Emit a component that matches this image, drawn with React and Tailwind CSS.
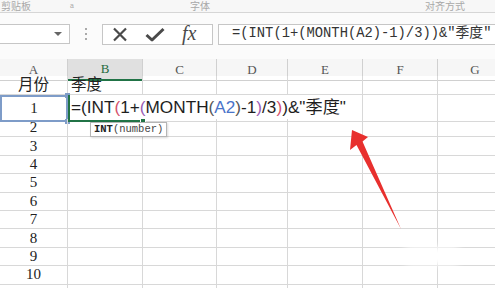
import React from 'react';

const grid = 'grid grid-cols-[68px_75px_74px_71px_75px_75px_75px]';
const line = 'border-[#d8d8d8]';

function Cell({ className = '', children }) {
  return (
    <div className={`relative border-r border-b ${line} ${className}`}>
      {children}
    </div>
  );
}

function FormulaText() {
  return (
    <span className="whitespace-nowrap text-[#1e1e1e]">
      =(INT<span className="text-[#d4506c]">(</span>1+<span className="text-[#9a5cb4]">(</span>MONTH
      <span className="text-[#555]">(</span>
      <span className="text-[#4a74c9]">A2</span>
      <span className="text-[#555]">)</span>-1<span className="text-[#9a5cb4]">)</span>/3
      <span className="text-[#d4506c]">)</span>)&amp;"季度"
    </span>
  );
}

export default function App() {
  const headers = ['A', 'B', 'C', 'D', 'E', 'F', 'G'];
  const rows = ['2', '3', '4', '5', '6', '7', '8', '9', '10', ''];

  return (
    <div className="relative w-[495px] h-[288px] overflow-hidden bg-white font-['Liberation_Sans','Noto_Sans_CJK_SC',sans-serif]">
      {/* ribbon group labels */}
      <div className="h-[13px] border-b border-[#d6d6d6] bg-[#f7f7f7] flex items-center">
        <div className="flex text-[10px] leading-[11px] text-[#a8a8a8]">
          <span className="w-[70px] pl-[1px]">剪贴板</span>
          <span className="w-[120px]">ᵃ</span>
          <span className="w-[235px]">字体</span>
          <span>对齐方式</span>
        </div>
      </div>

      {/* formula bar */}
      <div className="h-[46px] bg-[#fbfbfb] pt-[11px]">
        <div className="flex items-center h-[20px]">
          <div className="w-[70px] h-[20px] border border-l-0 border-[#c6c6c6] bg-white flex items-center justify-end pr-[7px]">
            <div className="w-0 h-0 border-l-[4px] border-r-[4px] border-t-[4px] border-l-transparent border-r-transparent border-t-[#666]" />
          </div>
          <div className="w-[32px] flex flex-col items-center gap-[3px]">
            <span className="w-[2px] h-[2px] bg-[#aaa]" />
            <span className="w-[2px] h-[2px] bg-[#aaa]" />
            <span className="w-[2px] h-[2px] bg-[#aaa]" />
          </div>
          <div className="w-[111px] h-[21px] border border-[#c6c6c6] bg-white flex items-center pl-[9px] gap-[17px]">
            <svg width="16" height="15" viewBox="0 0 16 15">
              <path d="M2 1.5 L14 13.5 M14 1.5 L2 13.5" stroke="#4a4a4a" strokeWidth="2.2" fill="none" />
            </svg>
            <svg width="20" height="15" viewBox="0 0 20 15">
              <path d="M1.5 8 L7 13 L18.5 2" stroke="#4a4a4a" strokeWidth="3" fill="none" strokeLinejoin="round" />
            </svg>
            <span className="font-['Liberation_Serif',serif] italic text-[20px] leading-[18px] text-[#4a4a4a] -mt-[2px]">fx</span>
          </div>
          <div className="ml-[5px] flex-1 h-[21px] border border-r-0 border-[#c6c6c6] bg-white flex items-center pl-[13px] overflow-hidden">
            <span className="font-['Liberation_Mono','Noto_Sans_CJK_SC',monospace] text-[13.8px] text-[#333] whitespace-nowrap">
              =(INT(1+(MONTH(A2)-1)/3))&amp;"季度"
            </span>
          </div>
        </div>
      </div>

      {/* sheet */}
      <div className="w-[513px] font-['Liberation_Serif','Noto_Sans_CJK_SC',serif]">
        <div className={`${grid} h-[17px] bg-[#f6f6f6]`}>
          {headers.map((h) =>
            h === 'B' ? (
              <div key={h} className="relative bg-[#e0e0e0] border-r border-b-2 border-r-[#d0d0d0] border-b-[#217346] flex items-center justify-center text-[13px] text-[#1f6b40]">
                {h}
              </div>
            ) : (
              <div key={h} className="border-r border-b border-[#d0d0d0] flex items-center justify-center text-[13px] text-[#555]">
                {h}
              </div>
            )
          )}
        </div>

        <div className={`${grid} h-[19px]`}>
          <Cell className="flex items-center justify-center text-[15.5px] leading-none text-[#222]">月份</Cell>
          <Cell className="flex items-center pl-[3px] text-[15.5px] leading-none text-[#222]">季度</Cell>
          <Cell />
          <Cell />
          <Cell />
          <Cell />
          <Cell />
        </div>

        <div className={`${grid} h-[24px]`}>
          <div className="relative border-2 border-[#7e9cc8] flex items-center justify-center text-[15px] text-[#222]">
            1
            <span className="absolute -right-[4px] -top-[4px] w-[5px] h-[5px] bg-[#7e9cc8]" />
            <span className="absolute -right-[4px] -bottom-[4px] w-[5px] h-[5px] bg-[#7e9cc8]" />
          </div>
          <div className="relative z-10 border-l-2 border-b-2 border-[#217346] flex items-center pl-[1px] font-['Liberation_Sans','Noto_Sans_CJK_SC',sans-serif] text-[17.2px] leading-none">
            <FormulaText />
            <span className="absolute -right-[3px] -bottom-[4px] w-[6px] h-[6px] bg-[#217346] border border-white" />
            <div className="absolute left-[20px] top-[calc(100%+2px)] h-[15px] px-[3px] border border-[#b5b5b5] bg-white shadow-[1px_1px_2px_rgba(0,0,0,0.15)] flex items-center font-['Liberation_Mono',monospace] text-[10.5px] text-[#444] whitespace-nowrap">
              <b className="text-[#222]">INT</b>(number)
            </div>
          </div>
          <div className={`border-b ${line}`} />
          <div className={`border-b ${line}`} />
          <Cell />
          <Cell />
          <Cell />
        </div>

        {rows.map((r, i) => (
          <div key={i} className={`${grid} h-[18.4px]`}>
            <Cell className="flex items-center justify-center text-[15px] leading-none text-[#222]">{r}</Cell>
            <Cell />
            <Cell />
            <Cell />
            <Cell />
            <Cell />
            <Cell />
          </div>
        ))}
      </div>

      {/* red annotation arrow */}
      <svg className="absolute left-0 top-0 pointer-events-none" width="495" height="288">
        <polygon points="352,130 368,137 362.5,141.5 401,229 356.5,145 350,150" fill="#e8302e" />
      </svg>
      <div className="absolute left-[402px] top-[247px] w-[60px] h-[18px] rounded-full bg-white blur-[3px] pointer-events-none" />
    </div>
  );
}
